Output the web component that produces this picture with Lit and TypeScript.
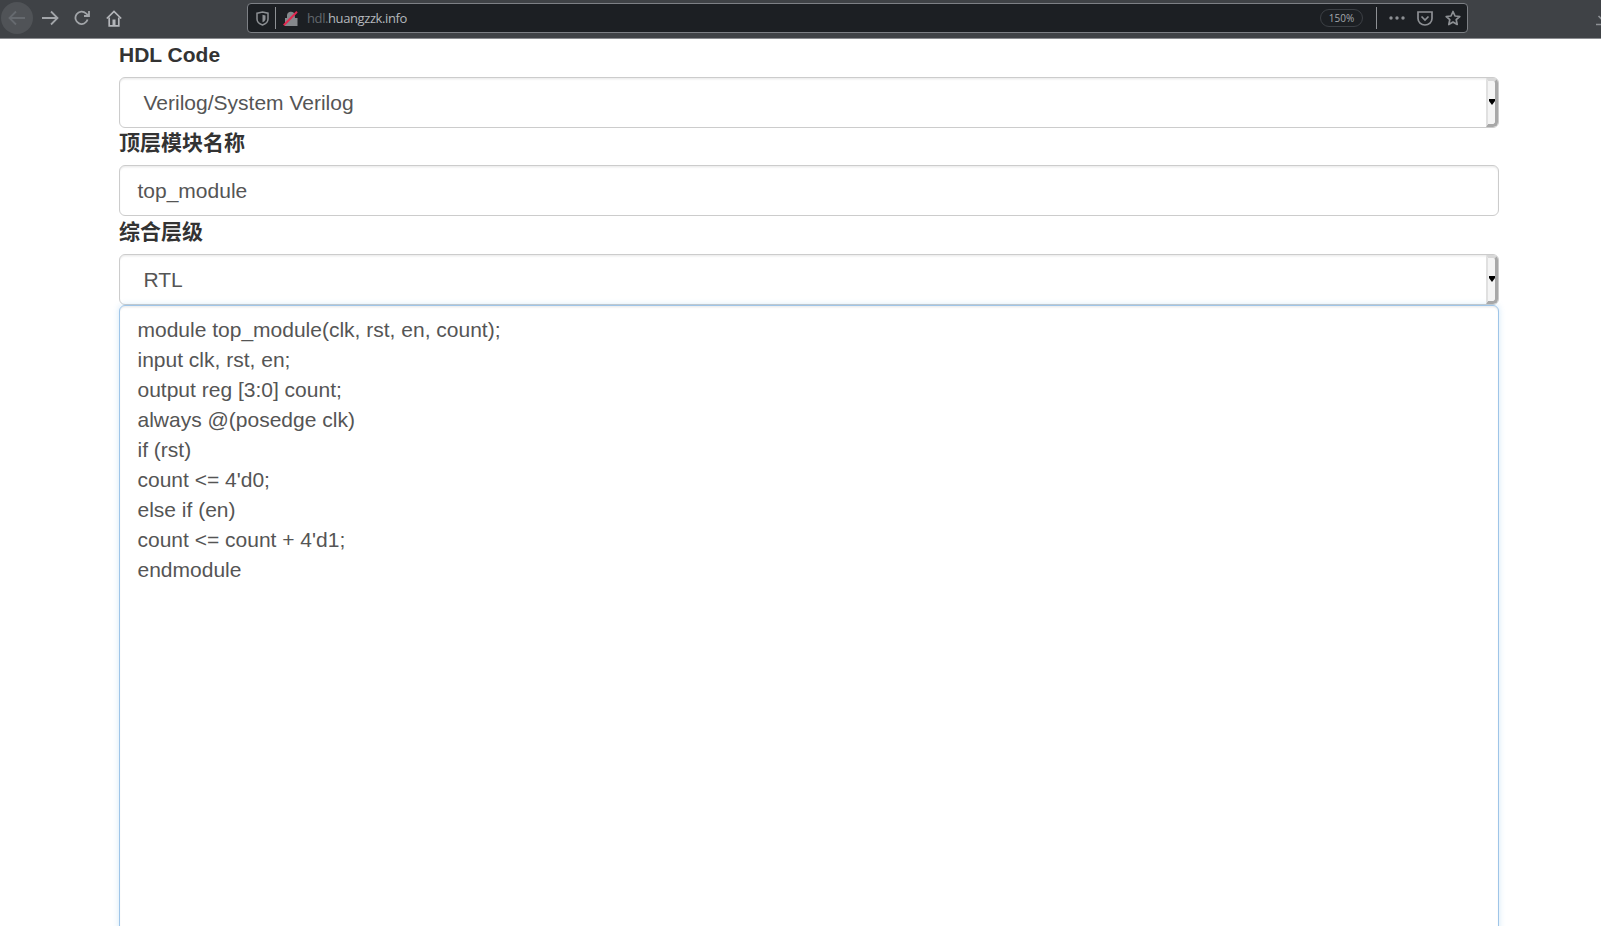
import { LitElement, html, css, svg } from "lit";
import { customElement } from "lit/decorators.js";

const codeLines = [
  "module top_module(clk, rst, en, count);",
  "input clk, rst, en;",
  "output reg [3:0] count;",
  "always @(posedge clk)",
  "if (rst)",
  "count <= 4'd0;",
  "else if (en)",
  "count <= count + 4'd1;",
  "endmodule",
];

const icon = (w: number, h: number, body: unknown, cls = "") =>
  html`<svg class=${cls} width=${w} height=${h} viewBox="0 0 ${w} ${h}" fill="none">${body}</svg>`;

@customElement("app-root")
export class AppRoot extends LitElement {
  static styles = css`
    :host {
      display: block;
      height: 926px;
      overflow: hidden;
      background: #fff;
      font-family: "Liberation Sans", "Noto Sans CJK SC", sans-serif;
    }
    .toolbar {
      border-bottom: 1px solid #8a8c90;
      background: #3f4246;
      display: flex;
      align-items: center;
      padding-bottom: 2px;
      box-sizing: border-box;
      height: 39px;
      overflow: hidden;
    }
    .nav {
      display: flex;
      align-items: center;
      width: 247px;
      flex: none;
      padding-left: 1px;
      box-sizing: border-box;
    }
    .back {
      width: 32px;
      height: 32px;
      border-radius: 50%;
      background: #505357;
      display: flex;
      align-items: center;
      justify-content: center;
      margin-right: 9px;
    }
    .fwd { margin-right: 15px; }
    .reload { margin-right: 16px; }
    .urlbar {
      width: 1221px;
      height: 30px;
      flex: none;
      box-sizing: border-box;
      border: 1px solid #7d8085;
      border-radius: 4px;
      background: #1c1f23;
      display: flex;
      align-items: center;
      padding: 0 6px 0 8px;
    }
    .sep {
      width: 1px;
      height: 22px;
      background: #8d9094;
      flex: none;
    }
    .sep-a { margin: 0 7px 0 6px; }
    .url {
      margin-left: 9px;
      font: 13px/1 "Open Sans", sans-serif;
      letter-spacing: -0.4px;
      color: #b4b8bc;
      flex: 1;
    }
    .url span { color: #62676c; }
    .zoom {
      width: 43px;
      height: 18px;
      box-sizing: border-box;
      border: 1px solid #3c4045;
      border-radius: 9px;
      font: 10px/16px "Open Sans", sans-serif;
      color: #a3a8ad;
      text-align: center;
      margin-right: 13px;
    }
    .sep-b { margin-right: 12px; }
    .dots { margin-right: 12px; }
    .pocket { margin-right: 12px; }
    .dl { margin-left: auto; margin-right: -10px; flex: none; }
    .form {
      width: 1380px;
      margin-left: 119px;
    }
    .label {
      font-size: 21px;
      font-weight: 700;
      line-height: 30px;
      color: #333;
      margin-bottom: 7.5px;
    }
    .label.low {
      padding-top: 1px;
      margin-bottom: 6.5px;
    }
    .control {
      height: 51px;
      box-sizing: border-box;
      border: 1.5px solid #ccc;
      border-radius: 6px;
      box-shadow: inset 0 1.5px 1.5px rgba(0, 0, 0, 0.075);
      font-size: 21px;
      line-height: 30px;
      color: #555;
      background: #fff;
      display: flex;
      align-items: center;
      padding-left: 17.5px;
    }
    .select { padding-left: 23.5px; }
    .select .value { flex: 1; padding-top: 1.5px; }
    .spin {
      width: 12px;
      align-self: stretch;
      box-sizing: border-box;
      background: #f4f4f4;
      border-left: 2.5px solid #e0e0e0;
      border-right: 3.5px solid #a8a8a8;
      border-bottom: 3px solid #a8a8a8;
      border-top: 3px solid #d8d8d8;
      border-radius: 0 5px 5px 0;
      display: flex;
      align-items: center;
      justify-content: center;
    }
    .caret {
      flex: none;
      width: 6px;
      height: 2px;
      margin-bottom: 5px;
      background: #000;
      position: relative;
    }
    .caret::after {
      content: "";
      position: absolute;
      left: 0;
      top: 2px;
      border-left: 3px solid transparent;
      border-right: 3px solid transparent;
      border-top: 4px solid #000;
    }
    .code {
      height: 800px;
      box-sizing: border-box;
      border: 1.5px solid #9fc5e8;
      border-radius: 6px;
      box-shadow: inset 0 1.5px 1.5px rgba(0, 0, 0, 0.075), 0 0 6px rgba(102, 175, 233, 0.3);
      padding: 9px 17.5px;
      font-size: 21px;
      line-height: 30px;
      color: #555;
      background: #fff;
    }
  `;

  render() {
    return html`
      <div class="toolbar">
        <div class="nav">
          <div class="back">
            ${icon(18, 16, svg`<path d="M1.5 8H17M8 1.5 1.5 8 8 14.5" stroke="#666a6f" stroke-width="1.8"/>`)}
          </div>
          ${icon(17, 16, svg`<path d="M0 8H15.5M9 1.5 15.5 8 9 14.5" stroke="#a2a5a9" stroke-width="1.8"/>`, "fwd")}
          ${icon(16, 16, svg`<path d="M13.6 9.6A6.2 6.2 0 1 1 12 3.4L14.6 5.6M15 1V6H10" stroke="#a2a5a9" stroke-width="1.8"/>`, "reload")}
          ${icon(16, 17, svg`<path d="M.8 8.500 8 1.500l7.200 7" stroke="#b4b6ba" stroke-width="1.700"/><path d="M3.200 7.500V15.800H12.800V7.500" stroke="#b4b6ba" stroke-width="1.700"/><rect x="6.500" y="9.500" width="3" height="6" fill="#b4b6ba"/>`)}
        </div>
        <div class="urlbar">
          ${icon(13, 15, svg`<path d="M1 2.200 6.500 1 12 2.200V8c0 3-2.500 5-5.500 6C3.500 13 1 11 1 8Z" stroke="#8d9094" stroke-width="1.500"/><path d="M6.500 3.800 9.500 4.600V8c0 1.600-1.400 2.600-3 3.300Z" fill="#8d9094"/>`)}
          <div class="sep sep-a"></div>
          ${icon(15, 15, svg`<path d="M4 7V4.500a4 4 0 0 1 7.600-1.500L12 7h2.500v8H2V7Z" fill="#85888c"/><path d="M.8 14.200 14 .8" stroke="#e22850" stroke-width="2"/>`)}
          <div class="url"><span>hdl.</span>huangzzk.info</div>
          <div class="zoom">150%</div>
          <div class="sep sep-b"></div>
          ${icon(16, 4, svg`<circle cx="2" cy="2" r="1.700" fill="#8d9094"/><circle cx="8" cy="2" r="1.700" fill="#8d9094"/><circle cx="14" cy="2" r="1.700" fill="#8d9094"/>`, "dots")}
          ${icon(16, 15, svg`<path d="M1 1h14v6.500a7 6.500 0 0 1-14 0Z" stroke="#8d9094" stroke-width="1.700"/><path d="M4.500 5.500 8 9l3.500-3.500" stroke="#8d9094" stroke-width="1.700"/>`, "pocket")}
          ${icon(16, 16, svg`<path d="M8 1.500 10 6l4.800.5-3.600 3.200 1 4.800L8 12l-4.200 2.500 1-4.800L1.200 6.500 6 6Z" stroke="#8d9094" stroke-width="1.700" stroke-linejoin="round"/>`)}
        </div>
        ${icon(16, 16, svg`<path d="M8 0V10M3.500 6 8 10.500 12.500 6M1 14.500H15" stroke="#8d9094" stroke-width="1.600"/>`, "dl")}
      </div>
      <div class="form">
        <div class="label low">HDL Code</div>
        <div class="control select">
          <div class="value">Verilog/System Verilog</div>
          <div class="spin"><div class="caret"></div></div>
        </div>
        <div class="label">顶层模块名称</div>
        <div class="control">top_module</div>
        <div class="label low">综合层级</div>
        <div class="control select">
          <div class="value">RTL</div>
          <div class="spin"><div class="caret"></div></div>
        </div>
        <div class="code">${codeLines.map((l) => html`<div>${l}</div>`)}</div>
      </div>
    `;
  }
}
